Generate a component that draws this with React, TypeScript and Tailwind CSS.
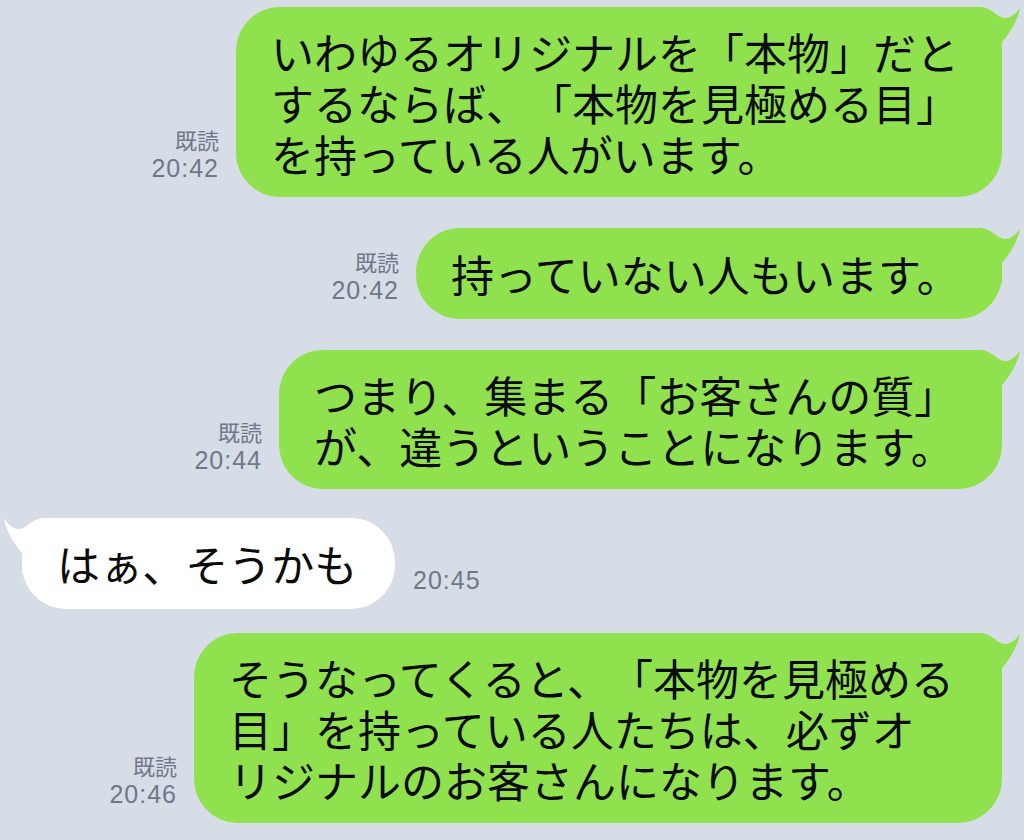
const JP = { fontFamily: '"Noto Sans CJK JP", "Noto Sans", sans-serif' };

type Msg = {
  side: "me" | "them";
  lines: string[];
  width: number;
  time: string;
  read?: boolean;
  mt: string;
};

const messages: Msg[] = [
  {
    side: "me",
    lines: [
      "いわゆるオリジナルを「本物」だと",
      "するならば、「本物を見極める目」",
      "を持っている人がいます。",
    ],
    width: 766,
    time: "20:42",
    read: true,
    mt: "mt-[7px]",
  },
  {
    side: "me",
    lines: ["持っていない人もいます。"],
    width: 586,
    time: "20:42",
    read: true,
    mt: "mt-[31px]",
  },
  {
    side: "me",
    lines: ["つまり、集まる「お客さんの質」", "が、違うということになります。"],
    width: 723,
    time: "20:44",
    read: true,
    mt: "mt-[31px]",
  },
  {
    side: "them",
    lines: ["はぁ、そうかも"],
    width: 373,
    time: "20:45",
    mt: "mt-[29px]",
  },
  {
    side: "me",
    lines: [
      "そうなってくると、「本物を見極める",
      "目」を持っている人たちは、必ずオ",
      "リジナルのお客さんになります。",
    ],
    width: 808,
    time: "20:46",
    read: true,
    mt: "mt-[24px]",
  },
];

// little horn at the top corner of a bubble
const Tail = ({ color, flip }: { color: string; flip?: boolean }) => (
  <svg
    width={63}
    height={55}
    viewBox="-45 0 63 55"
    className={`absolute top-0 ${flip ? "-left-[18px] -scale-x-100" : "-right-[18px]"}`}
  >
    <path
      d="M -45 0 L -22 0 C -10 0 -5 11 3 11 C 9 11 14 6 18 1 C 15 15 7 27 0 35 L 0 55 L -45 55 Z"
      fill={color}
    />
  </svg>
);

const Stamp = ({ time, read }: { time: string; read?: boolean }) => (
  <div className="flex flex-col items-end mb-[14px] text-[#6f788a] shrink-0">
    {read && (
      <span className="text-[22px] leading-[28px]" style={JP}>
        既読
      </span>
    )}
    <span
      className="text-[25px] leading-[30px] tracking-[1px]"
      style={{ fontFamily: '"Liberation Sans", Arial, sans-serif' }}
    >
      {time}
    </span>
  </div>
);

const Bubble = ({ msg }: { msg: Msg }) => {
  const mine = msg.side === "me";
  const color = mine ? "#8fe14e" : "#ffffff";
  return (
    <div
      className={`relative rounded-[44px] min-h-[91px] flex flex-col justify-center py-[18.5px] pl-[35px] text-[43px] leading-[51px] text-[#0b0b0b] shrink-0 [text-spacing-trim:space-all] ${
        mine ? "bg-[#8fe14e]" : "bg-white"
      }`}
      style={{ ...JP, width: msg.width }}
    >
      <Tail color={color} flip={!mine} />
      {msg.lines.map((l) => (
        <span key={l} className="relative whitespace-nowrap">
          {l}
        </span>
      ))}
    </div>
  );
};

export default function App() {
  return (
    <div className="w-full min-h-[840px] bg-[#d7dde6] px-[22px] flex flex-col overflow-hidden">
      {messages.map((m, i) =>
        m.side === "me" ? (
          <div key={i} className={`flex justify-end items-end gap-[17px] ${m.mt}`}>
            <Stamp time={m.time} read={m.read} />
            <Bubble msg={m} />
          </div>
        ) : (
          <div key={i} className={`flex justify-start items-end gap-[18px] ${m.mt}`}>
            <Bubble msg={m} />
            <Stamp time={m.time} />
          </div>
        )
      )}
    </div>
  );
}
